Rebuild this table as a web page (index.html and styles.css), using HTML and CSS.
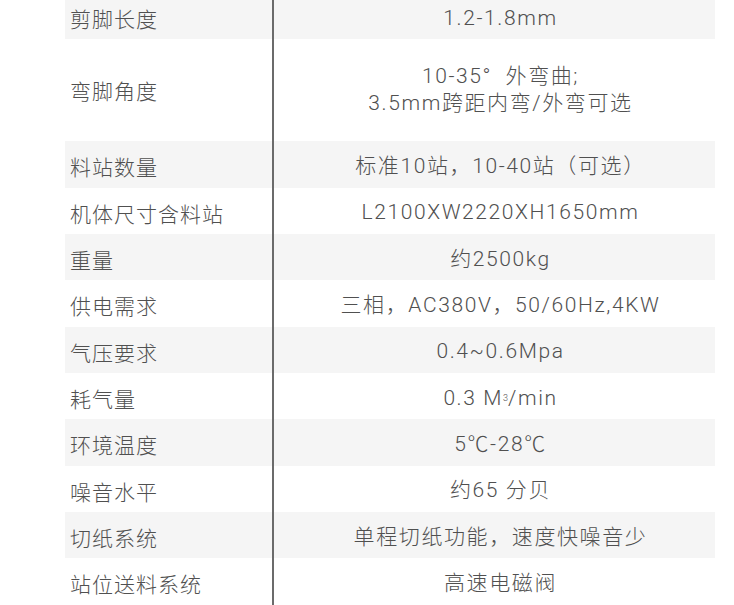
FILE: index.html
```html
<!DOCTYPE html>
<html lang="zh-CN">
<head>
<meta charset="utf-8">
<title>参数</title>
<link rel="stylesheet" href="styles.css">
</head>
<body>
<div class="specs">
  <div class="row alt"><div class="key">剪脚长度</div><div class="val">1.2-1.8mm</div></div>
  <div class="row tall"><div class="key">弯脚角度</div><div class="val">10-35°&nbsp;&nbsp;外弯曲;<br>3.5mm跨距内弯/外弯可选</div></div>
  <div class="row alt"><div class="key">料站数量</div><div class="val">标准10站，10-40站（可选）</div></div>
  <div class="row"><div class="key">机体尺寸含料站</div><div class="val">L2100XW2220XH1650mm</div></div>
  <div class="row alt"><div class="key">重量</div><div class="val">约2500kg</div></div>
  <div class="row"><div class="key">供电需求</div><div class="val">三相，AC380V，50/60Hz,4KW</div></div>
  <div class="row alt"><div class="key">气压要求</div><div class="val">0.4~0.6Mpa</div></div>
  <div class="row"><div class="key">耗气量</div><div class="val">0.3 M<sup>3</sup>/min</div></div>
  <div class="row alt"><div class="key">环境温度</div><div class="val">5℃-28℃</div></div>
  <div class="row"><div class="key">噪音水平</div><div class="val">约65 分贝</div></div>
  <div class="row alt"><div class="key">切纸系统</div><div class="val">单程切纸功能，速度快噪音少</div></div>
  <div class="row"><div class="key">站位送料系统</div><div class="val">高速电磁阀</div></div>
</div>
</body>
</html>
```
FILE: styles.css
```css
html, body {
  margin: 0;
  padding: 0;
  background: #ffffff;
}
body {
  font-family: Roboto, "Noto Sans CJK SC", sans-serif;
  color: #505050;
  overflow: hidden;
}
.specs {
  margin: -7px 0 0 65px;
  width: 650px;
  display: flex;
  flex-direction: column;
}
.row {
  display: grid;
  grid-template-columns: 207px 1fr;
  height: 46.33px;
}
.row.tall {
  height: 102px;
}
.row.alt {
  background: #f5f5f5;
}
.key {
  display: flex;
  align-items: center;
  padding: 4px 0 0 5px;
  font-size: 21px;
  letter-spacing: 1px;
  font-weight: 300;
}
.val {
  display: flex;
  align-items: center;
  justify-content: center;
  text-align: center;
  border-left: 2px solid #6b6b6b;
  padding: 4px 0 0 12px;
  font-size: 21px;
  letter-spacing: 1.6px;
  font-weight: 300;
  line-height: 27px;
}
.row.tall .key,
.row.tall .val {
  padding-top: 0;
}
.val sup {
  font-size: 9px;
  line-height: 0;
  letter-spacing: 0;
  vertical-align: 9px;
}
```
